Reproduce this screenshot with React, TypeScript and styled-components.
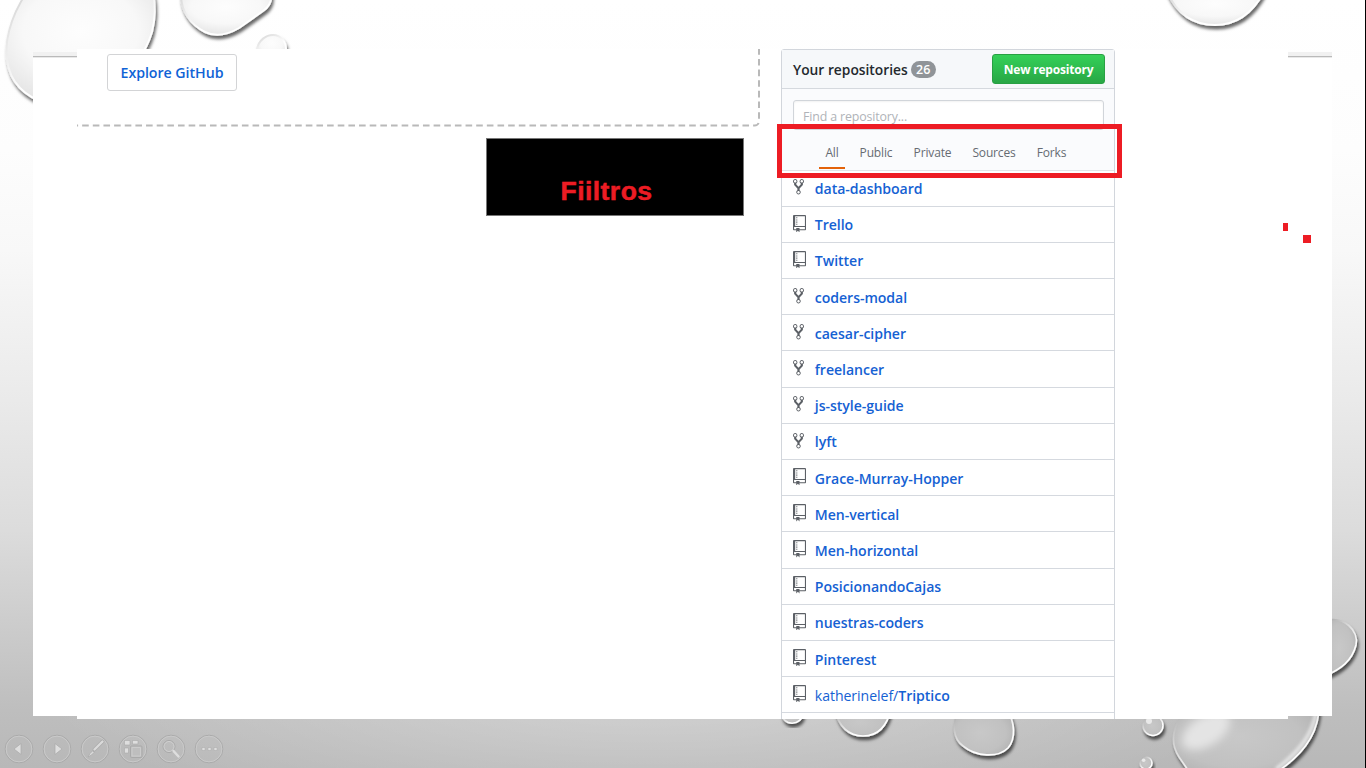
import React from 'react';
import styled, { createGlobalStyle } from 'styled-components';

const Global = createGlobalStyle`
  * { box-sizing: border-box; }
  body { margin: 0; background: #fff; overflow: hidden; font-family: 'Open Sans', 'Noto Sans', sans-serif; }
`;

const Slide = styled.main`
  position: relative;
  display: grid;
  width: 1366px;
  height: 768px;
  overflow: hidden;
  border-right: 1px solid #000;
  background:
    radial-gradient(ellipse 620px 150px at 650px 680px, rgba(255, 255, 255, 0.34), rgba(255, 255, 255, 0)),
    linear-gradient(#fff 0, #fdfdfd 150px, #f8f8f8 250px, #eaeaea 400px, #dcdcdc 530px, #cdcdcd 620px, #bebebe 710px, #b8b8b8 768px);
`;

const Backdrop = styled.svg`
  position: absolute;
  inset: 0;
`;

const BackSheet = styled.div`
  grid-area: 1 / 1;
  z-index: 1;
  width: 1299px;
  height: 664px;
  margin: 52px 0 0 33px;
  background: #fff;
  border-top: 4px solid #f1f1f1;
  box-shadow: inset 0 1px #bababa, inset 0 2px #e9e9e9;
`;

const FrontSheet = styled.section`
  grid-area: 1 / 1;
  z-index: 2;
  display: flex;
  width: 1211px;
  height: 670px;
  margin: 49px 0 0 77px;
  background: #fff;
  overflow: hidden;
`;

const MainColumn = styled.div`
  display: flex;
  flex-direction: column;
  width: 704px;
`;

const Welcome = styled.div`
  position: relative;
  width: 684px;
  height: 79px;
  padding: 5px 0 0 30px;
`;

const Dashes = styled.svg`
  position: absolute;
  inset: 0;
`;

const ExploreButton = styled.button`
  width: 130px;
  height: 37px;
  padding: 0 0 1px;
  border: 1px solid #d3d4d6;
  border-radius: 3px;
  background: #fff;
  color: #0f63d6;
  font: 600 14.2px 'Open Sans', sans-serif;
  letter-spacing: -0.04px;
  white-space: nowrap;
`;

const Caption = styled.div`
  display: flex;
  justify-content: center;
  width: 258px;
  height: 78px;
  margin: 10px 0 0 409px;
  padding: 36px 17px 0 0;
  border: 1px solid #777;
  background: #000;
  color: #ed1c24;
  font: 700 26.5px/32px 'Liberation Sans', sans-serif;
  letter-spacing: 0.45px;
  -webkit-text-stroke: 0.5px #ed1c24;
`;

const Panel = styled.aside`
  width: 334px;
  height: 700px;
  flex: none;
  border: 1px solid #d2d6dc;
  border-radius: 3px 3px 0 0;
`;

const PanelHeader = styled.header`
  display: flex;
  align-items: center;
  height: 39px;
  padding: 0 9px 0 11px;
  border-bottom: 1px solid #d5d9de;
  background: #f6f8fa;
`;

const Title = styled.h2`
  margin: 0;
  color: #24292e;
  font-size: 13.8px;
  font-weight: 600;
  letter-spacing: 0;
  white-space: nowrap;
`;

const Counter = styled.span`
  width: 25px;
  height: 17px;
  margin-left: 3px;
  border-radius: 9px;
  background: #909498;
  color: #fff;
  font-size: 12.5px;
  font-weight: 600;
  line-height: 17px;
  text-align: center;
`;

const NewButton = styled.button`
  width: 113px;
  height: 30px;
  margin-left: auto;
  padding: 1px 0 0;
  border: 1px solid #28a043;
  border-radius: 3px;
  background: linear-gradient(#34d058, #28a745);
  color: #fff;
  font: 700 12px 'Open Sans', sans-serif;
  letter-spacing: -0.2px;
  white-space: nowrap;
`;

const FilterArea = styled.div`
  height: 81.500px;
  padding: 11px 11px 0;
  border-bottom: 1px solid #e1e4e8;
  background: #fafbfd;
`;

const Search = styled.input`
  display: block;
  width: 311px;
  height: 30px;
  padding: 2px 9px 0;
  border: 1px solid #d1d5da;
  border-radius: 3px;
  background: #fff;
  box-shadow: inset 0 1px 2px rgba(27, 31, 35, 0.06);
  font: 400 12.4px 'Open Sans', sans-serif;
  letter-spacing: -0.15px;
  &::placeholder { color: #b0b3b8; opacity: 1; }
`;

const Tabs = styled.nav`
  display: flex;
  gap: 7.5px;
  padding-left: 26px;
`;

const Tab = styled.a<{ $width: number; $active?: boolean }>`
  width: ${(p) => p.$width}px;
  height: 39px;
  border-bottom: 2px solid ${(p) => (p.$active ? '#e36209' : 'transparent')};
  color: #666b72;
  font-size: 12px;
  letter-spacing: -0.15px;
  line-height: 45px;
  text-align: center;
  white-space: nowrap;
`;

const FilterFrame = styled.div`
  position: absolute;
  z-index: 3;
  left: 777px;
  top: 124px;
  width: 345px;
  height: 54px;
  border: 5px solid #ed1c24;
`;

const Speck = styled.i<{ $x: number; $y: number; $w: number }>`
  position: absolute;
  z-index: 3;
  left: ${(p) => p.$x}px;
  top: ${(p) => p.$y}px;
  width: ${(p) => p.$w}px;
  height: 8px;
  background: #ed1c24;
`;

const RepoList = styled.ul`
  margin: 0;
  padding: 0;
  list-style: none;
`;

const RepoRow = styled.li`
  display: grid;
  grid-template-columns: 21.800px 1fr;
  align-items: center;
  height: 36.2px;
  padding-left: 11px;
  border-bottom: 1px solid #d5d9df;
`;

const RepoLink = styled.a`
  color: #1561d3;
  font-size: 14.1px;
  line-height: 20px;
  padding-top: 2px;
  letter-spacing: -0.05px;
  white-space: nowrap;
  b { font-weight: 600; }
`;

const RepoIcon = styled.svg`
  display: block;
  margin-top: -2px;
  fill: #5c6066;
`;

const ShowControls = styled.div`
  position: absolute;
  z-index: 4;
  left: 4px;
  bottom: 4px;
  display: flex;
  gap: 8px;
`;

const ControlIcon = styled.svg`
  width: 30px;
  height: 30px;
  fill: none;
  stroke: #a9a9a9;
`;

type Repo = { name: string; owner?: string; fork?: boolean };

const repos: Repo[] = [
  { name: 'data-dashboard', fork: true },
  { name: 'Trello' },
  { name: 'Twitter' },
  { name: 'coders-modal', fork: true },
  { name: 'caesar-cipher', fork: true },
  { name: 'freelancer', fork: true },
  { name: 'js-style-guide', fork: true },
  { name: 'lyft', fork: true },
  { name: 'Grace-Murray-Hopper' },
  { name: 'Men-vertical' },
  { name: 'Men-horizontal' },
  { name: 'PosicionandoCajas' },
  { name: 'nuestras-coders' },
  { name: 'Pinterest' },
  { name: 'Triptico', owner: 'katherinelef/' },
];

const forkPath =
  'M8 1a1.993 1.993 0 0 0-1 3.72V6L5 8 3 6V4.72A1.993 1.993 0 0 0 2 1a1.993 1.993 0 0 0-1 3.72V6.5l3 3v1.78A1.993 1.993 0 0 0 5 15a1.993 1.993 0 0 0 1-3.72V9.5l3-3V4.72A1.993 1.993 0 0 0 8 1zM2 4.2C1.34 4.2.8 3.65.8 3c0-.65.55-1.2 1.2-1.2.65 0 1.2.55 1.2 1.2 0 .65-.55 1.2-1.2 1.2zm3 10c-.66 0-1.2-.55-1.2-1.2 0-.65.55-1.2 1.2-1.2.65 0 1.2.55 1.2 1.2 0 .65-.55 1.2-1.2 1.2zm3-10c-.66 0-1.2-.55-1.2-1.2 0-.65.55-1.2 1.2-1.2.65 0 1.2.55 1.2 1.2 0 .65-.55 1.2-1.2 1.2z';
const repoPath =
  'M4 9H3V8h1v1zm0-3H3v1h1V6zm0-2H3v1h1V4zm0-2H3v1h1V2zm8-1v12c0 .55-.45 1-1 1H6v2l-1.5-1.5L3 16v-2H1c-.55 0-1-.45-1-1V1c0-.55.45-1 1-1h10c.55 0 1 .45 1 1zm-1 10H1v2h2v-1h3v1h5v-2zm0-10H2v9h9V1z';

const paleDrops = [
  'M27 -8C8 20 5 45 7 60C10 83 25 97 48 104C95 108 140 72 152 32Q157 12 153 -8Z',
  'M181 -8C180 11 191 25 205 32C215 37 227 35 239 28L263 11Q273 4 271 -8Z',
  'M257 49C259 40 266 35 273 35C281 35 286 42 286 49C286 61 257 61 257 49Z',
  'M1167 -8C1178 16 1196 25 1215 25C1234 25 1251 16 1264 -8Z',
];
const greyDrops = [
  'M782 712C781 727 803 727 803 712Z',
  'M835 708C838 728 850 736 863 736C876 736 887 728 891 708Z',
  'M960 710C951 722 953 739 963 746C976 757 998 758 1008 748C1016 739 1015 722 1007 710Z',
  'M1325 621C1344 615 1359 631 1356 645C1352 661 1341 669 1325 676Z',
  'M1187 708C1173 724 1169 742 1179 757L1190 773H1275C1304 755 1321 732 1319 700Z',
];
const beads = [
  { x: 1153, y: 725.5, r: 10 },
  { x: 1146, y: 763, r: 6 },
];

function WaterDrops() {
  return (
    <Backdrop width="1366" height="768" viewBox="0 0 1366 768">
      <defs>
        <radialGradient id="pale" cx=".5" cy=".35" r=".65">
          <stop offset="0" stopColor="#fdfdfd" />
          <stop offset=".6" stopColor="#f8f8f8" />
          <stop offset="1" stopColor="#e6e6e6" />
        </radialGradient>
        <radialGradient id="grey" cx=".45" cy=".5" r=".6">
          <stop offset="0" stopColor="#c8c8c8" />
          <stop offset=".7" stopColor="#c1c1c1" />
          <stop offset="1" stopColor="#b4b4b4" />
        </radialGradient>
        <linearGradient id="rim" x1="0" y1="0" x2=".8" y2="1">
          <stop offset="0" stopColor="#a4a4a4" />
          <stop offset=".4" stopColor="#d8d8d8" />
          <stop offset=".75" stopColor="#fff" />
        </linearGradient>
        <linearGradient id="paleRim" x1="0" y1="0" x2=".7" y2="1">
          <stop offset="0" stopColor="#d4d4d4" />
          <stop offset=".65" stopColor="#fff" />
        </linearGradient>
        <filter id="shadow" x="-20%" y="-20%" width="150%" height="160%">
          <feDropShadow dx="1.500" dy="3.500" stdDeviation="1.600" floodColor="#000" floodOpacity=".6" />
        </filter>
        <filter id="soft" x="-30%" y="-30%" width="160%" height="160%">
          <feGaussianBlur stdDeviation="4" />
        </filter>
        <filter id="glow" x="-30%" y="-30%" width="160%" height="160%">
          <feGaussianBlur stdDeviation="1.500" />
        </filter>
      </defs>
      {paleDrops.map((d) => (
        <path key={d} d={d} fill="url(#pale)" stroke="url(#paleRim)" strokeWidth="2" filter="url(#shadow)" />
      ))}
      {greyDrops.map((d) => (
        <path key={d} d={d} fill="url(#grey)" stroke="url(#rim)" strokeWidth="1.700" filter="url(#shadow)" />
      ))}
      <ellipse cx="1206" cy="731" rx="27" ry="15" transform="rotate(-32 1206 731)" fill="#e4e4e4" filter="url(#soft)" />
      <path d="M1316 712C1313 734 1298 753 1276 769" fill="none" stroke="#eee" strokeWidth="4" opacity=".75" filter="url(#glow)" />
      {beads.map((b) => (
        <g key={b.x}>
          <circle cx={b.x} cy={b.y} r={b.r} fill="url(#grey)" stroke="url(#rim)" strokeWidth="1.500" filter="url(#shadow)" />
          <circle cx={b.x - b.r * 0.4} cy={b.y - b.r * 0.45} r={b.r * 0.3} fill="#e9e9e9" />
        </g>
      ))}
    </Backdrop>
  );
}

const controlGlyphs = [
  <path key="back" d="M17 9.500v11L10 15z" fill="#dedede" strokeWidth=".7" />,
  <path key="next" d="M13 9.500v11l7-5.500z" fill="#dedede" strokeWidth=".7" />,
  <g key="pen" strokeLinecap="round">
    <path d="m22.500 7.500-8 8" stroke="#a9a9a9" strokeWidth="3.800" />
    <path d="m22.500 7.500-8 8" stroke="#dadada" strokeWidth="2.400" />
    <path d="m12.500 17-2.500 2.500-2 3.500 3.500-2 2.500-2.500z" fill="#dadada" strokeWidth=".7" />
  </g>,
  <g key="slides">
    <path d="M6.500 6.500h5.500v4.500H6.500zM14.500 6.500h5.500v3.500h-5.500zM6.500 14h4v5h-4z" fill="#dedede" strokeWidth=".6" />
    <rect x="12.500" y="12" width="11.500" height="11.500" rx="1" fill="#bebebe" />
    <path d="M14 13.500h8.500V22H14z" stroke="#cbcbcb" />
  </g>,
  <g key="zoom">
    <circle cx="13" cy="12.500" r="6" />
    <circle cx="13" cy="12.500" r="5" stroke="#d0d0d0" />
    <path d="m17.500 17 5 5.500" stroke="#dedede" strokeWidth="2.500" strokeLinecap="round" />
  </g>,
  <path key="more" d="M8 13.500h3v3H8zM14 13.500h3v3h-3zM20 13.500h3v3h-3z" fill="#dedede" strokeWidth=".5" />,
];

export default function App() {
  return (
    <>
      <Global />
      <Slide>
        <WaterDrops />
        <BackSheet />
        <FrontSheet>
          <MainColumn>
            <Welcome>
              <Dashes width="684" height="79">
                <path
                  d="M0 76.500H677.500Q682 76.500 682 71.500V0"
                  fill="none"
                  stroke="#b9b9b9"
                  strokeWidth="2"
                  strokeDasharray="6.600 4.050"
                  strokeDashoffset="5.500"
                />
              </Dashes>
              <ExploreButton>Explore GitHub</ExploreButton>
            </Welcome>
            <Caption>Fiiltros</Caption>
          </MainColumn>
          <Panel>
            <PanelHeader>
              <Title>Your repositories</Title>
              <Counter>26</Counter>
              <NewButton>New repository</NewButton>
            </PanelHeader>
            <FilterArea>
              <Search placeholder="Find a repository..." />
              <Tabs>
                <Tab $width={26} $active>All</Tab>
                <Tab $width={47}>Public</Tab>
                <Tab $width={51}>Private</Tab>
                <Tab $width={57}>Sources</Tab>
                <Tab $width={43}>Forks</Tab>
              </Tabs>
            </FilterArea>
            <RepoList>
              {repos.map((r) => (
                <RepoRow key={r.name}>
                  {r.fork ? (
                    <RepoIcon width="11" height="17.500" viewBox="0 0 10 16"><path d={forkPath} /></RepoIcon>
                  ) : (
                    <RepoIcon width="13" height="17.500" viewBox="0 0 12 16"><path d={repoPath} /></RepoIcon>
                  )}
                  <RepoLink>{r.owner}<b>{r.name}</b></RepoLink>
                </RepoRow>
              ))}
            </RepoList>
          </Panel>
        </FrontSheet>
        <FilterFrame />
        <Speck $x={1283} $y={223} $w={5} />
        <Speck $x={1303} $y={235} $w={8} />
        <ShowControls>
          {controlGlyphs.map((glyph) => (
            <ControlIcon key={glyph.key} viewBox="0 0 30 30">
              <circle cx="15" cy="15" r="13.800" />
              <circle cx="15" cy="15" r="12.900" stroke="#cacaca" />
              {glyph}
            </ControlIcon>
          ))}
        </ShowControls>
      </Slide>
    </>
  );
}
